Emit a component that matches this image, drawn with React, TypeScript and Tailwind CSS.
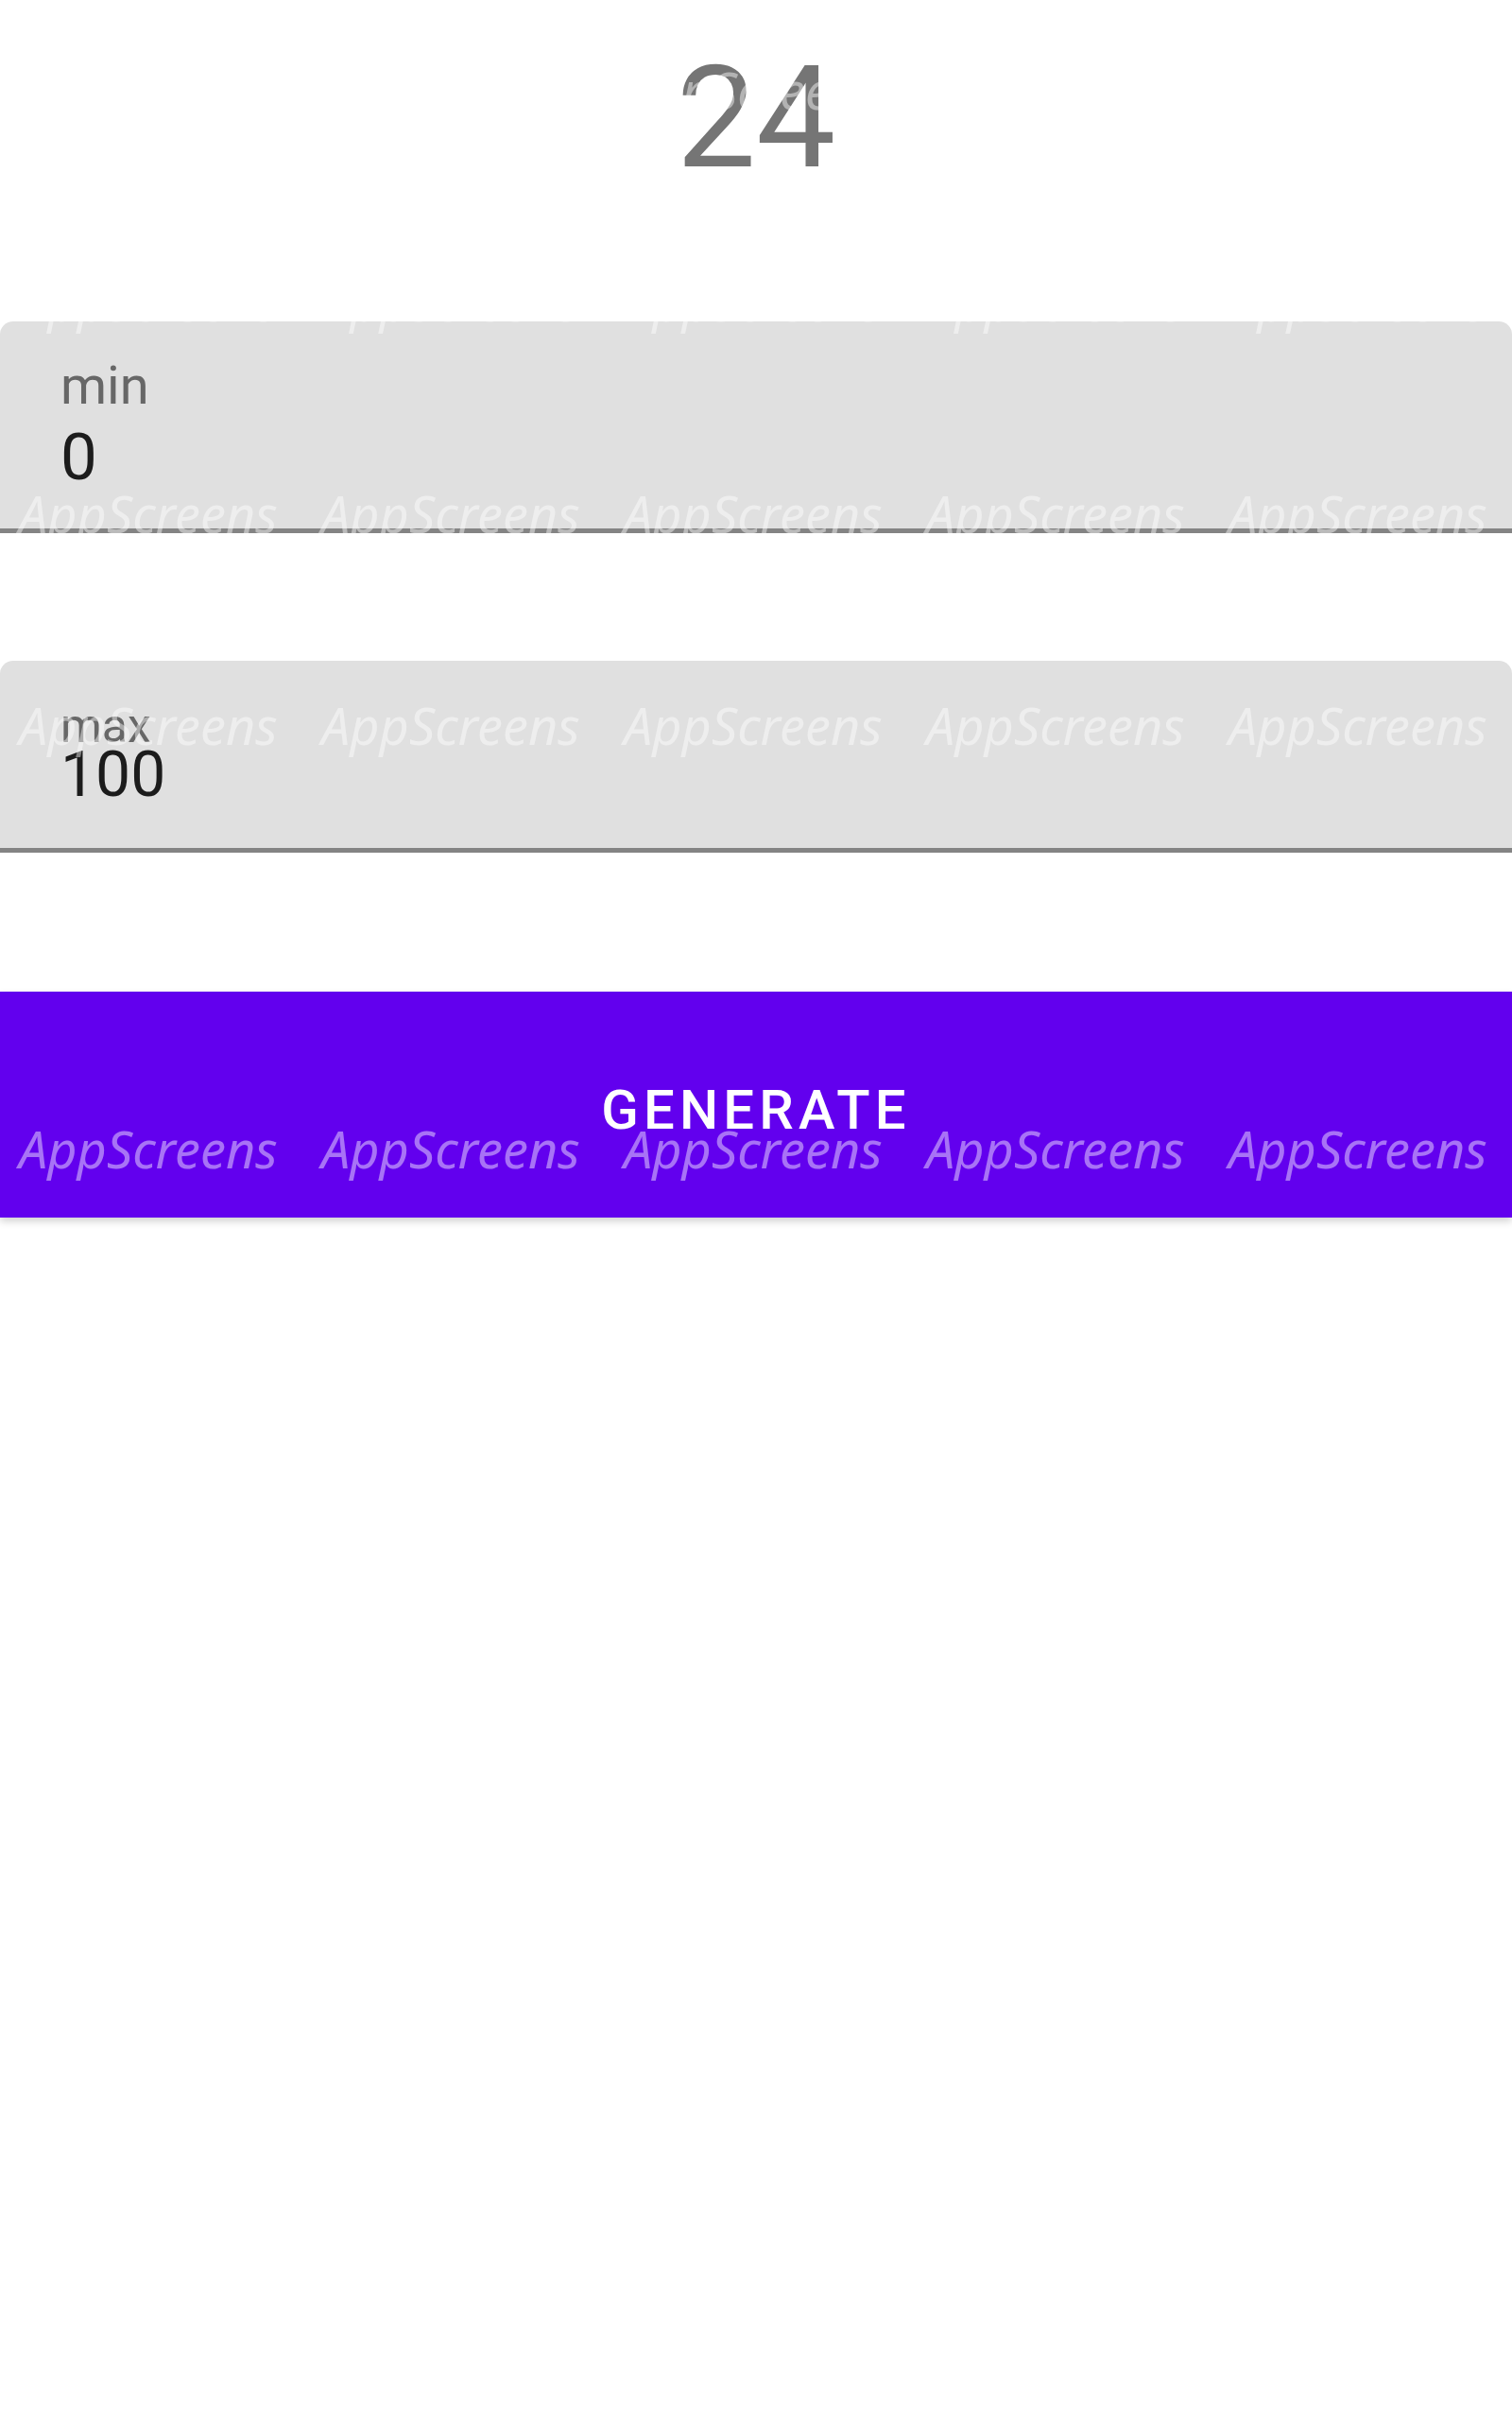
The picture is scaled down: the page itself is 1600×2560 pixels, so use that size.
const roboto = { fontFamily: "Roboto, 'Liberation Sans', sans-serif" };

function Watermark() {
  const rows = [0, 1, 2, 3, 4, 5];
  const cols = [0, 1, 2, 3, 4];
  return (
    <div className="pointer-events-none absolute inset-0 overflow-hidden pt-[68px]">
      {rows.map((r) => (
        <div key={r} className="flex h-[224px] pl-[20px]">
          {cols.map((c) => (
            <span
              key={c}
              className="w-[320px] shrink-0 text-[54px] italic leading-[54px] text-white/45"
              style={{ fontFamily: "'Noto Sans', Roboto, sans-serif", fontWeight: 400 }}
            >
              AppScreens
            </span>
          ))}
        </div>
      ))}
    </div>
  );
}

export default function App() {
  return (
    <div className="relative min-h-[2560px] w-[1600px] overflow-hidden bg-white" style={roboto}>
      <div className="pt-[50px] text-center text-[150px] leading-[150px] text-[#757575]">24</div>

      <div className="mt-[140px] h-[224px] rounded-t-[14px] border-b-[5px] border-[#848484] bg-[#e0e0e0] px-[64px] pt-[40px]">
        <div className="text-[56px] leading-[56px] text-[#676767]">min</div>
        <div className="mt-[13px] text-[69px] leading-[69px] text-[#1c1c1c]">0</div>
      </div>

      <div className="mt-[135px] h-[203px] rounded-t-[14px] border-b-[5px] border-[#848484] bg-[#e0e0e0] px-[64px] pt-[44px]">
        <div className="text-[50px] leading-[50px] text-[#676767]">max</div>
        <div className="mt-[-6px] text-[66px] leading-[66px] text-[#1c1c1c]">100</div>
      </div>

      <button className="mt-[147px] flex h-[239px] w-full items-center justify-center bg-[#6200ee] pt-[10px] shadow-[0_4px_8px_rgba(0,0,0,0.18)]">
        <span className="text-[58px] font-medium leading-[58px] tracking-[0.09em] text-white">GENERATE</span>
      </button>

      <Watermark />
    </div>
  );
}
